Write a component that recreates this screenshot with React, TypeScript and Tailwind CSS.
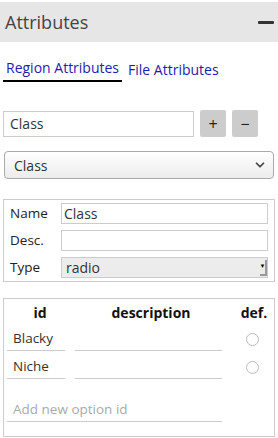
import { ChevronDown } from 'lucide-react';

const font = { fontFamily: '"Open Sans", "Noto Sans", sans-serif' };

function OptionRow({ id }: { id: string }) {
  return (
    <div className="flex items-center h-[28px]">
      <div className="w-[58px] ml-[3px] border-b border-[#ccc] h-[24px] flex items-center px-[6px] text-[13.5px] text-[#333]">
        {id}
      </div>
      <div className="w-[147px] ml-[10px] border-b border-[#ccc] h-[24px]" />
      <div className="flex-1 flex justify-center pl-[8px]">
        <span className="w-[13px] h-[13px] rounded-full border border-[#bbb] bg-white" />
      </div>
    </div>
  );
}

export default function App() {
  return (
    <div className="w-[278px] h-[438px] bg-white overflow-hidden text-[#333]" style={font}>
      {/* header */}
      <div className="mt-[2px] h-[40px] bg-[#e6e6e6] flex items-center justify-between pl-[5px] pr-[4px]">
        <span className="text-[18px] text-[#444]">Attributes</span>
        <span className="w-[16px] h-[3px] bg-[#333] rounded-[1px]" />
      </div>

      {/* tabs */}
      <div className="flex items-end mt-[16px] pl-[3px] gap-[6px]">
        <div className="px-[3px] pb-[2px] leading-[20px] border-b-2 border-black text-[14px] text-[#1c1cb0]">Region Attributes</div>
        <div className="pb-[2px] leading-[20px] text-[14px] text-[#1c1cb0]">File Attributes</div>
      </div>

      {/* new attribute */}
      <div className="flex items-center mt-[28px] pl-[3px] gap-[6px]">
        <div className="w-[191px] h-[26px] border border-[#ccc] flex items-center px-[6px] text-[14px]">Class</div>
        <button className="w-[26px] h-[27px] bg-[#ccc] rounded-[2px] text-[16px] text-[#222] flex items-center justify-center">+</button>
        <button className="w-[26px] h-[27px] bg-[#ccc] rounded-[2px] text-[16px] text-[#222] flex items-center justify-center">−</button>
      </div>

      <div className="mt-[14px] mx-[4px] h-[28px] rounded-[4px] border border-[#aaa] bg-gradient-to-b from-white to-[#ececec] flex items-center justify-between pl-[9px] pr-[6px] text-[14px]">
        <span>Class</span>
        <ChevronDown className="w-[14px] h-[14px] text-[#444]" strokeWidth={3} />
      </div>

      {/* attribute properties */}
      <div className="mt-[20px] mx-[3px] h-[83px] border border-[#ccc] flex flex-col gap-[6px] px-[6px] pt-[3px]">
        <div className="flex items-center">
          <span className="w-[51px] text-[13.5px] text-[#222]">Name</span>
          <div className="flex-1 h-[21px] border border-[#ccc] flex items-center px-[2px] text-[14px]">Class</div>
        </div>
        <div className="flex items-center">
          <span className="w-[51px] text-[13.5px] text-[#222]">Desc.</span>
          <div className="flex-1 h-[21px] border border-[#ccc]" />
        </div>
        <div className="flex items-center">
          <span className="w-[51px] text-[13.5px] text-[#222]">Type</span>
          <div className="flex-1 h-[21px] border border-[#ccc] bg-[#ececec] flex items-center justify-between pl-[4px] text-[14px]">
            <span>radio</span>
            <span className="w-[7px] h-[16px] border-r-2 border-b-2 border-[#999] flex items-center justify-center text-[6px] text-black">▼</span>
          </div>
        </div>
      </div>

      {/* options */}
      <div className="mt-[16px] mx-[3px] h-[139px] border border-[#ccc] pt-[2px]">
        <div className="flex items-center h-[22px] text-[14px] font-bold text-[#111]">
          <span className="w-[72px] text-center">id</span>
          <span className="w-[150px] text-center">description</span>
          <span className="flex-1 text-center pl-[8px]">def.</span>
        </div>
        <div className="mt-[2px]">
          <OptionRow id="Blacky" />
          <OptionRow id="Niche" />
        </div>
        <div className="mt-[17px] ml-[3px] w-[215px] border-b border-[#ccc] h-[24px] flex items-center px-[6px] text-[13.5px] text-[#aaa]">
          Add new option id
        </div>
      </div>
    </div>
  );
}
